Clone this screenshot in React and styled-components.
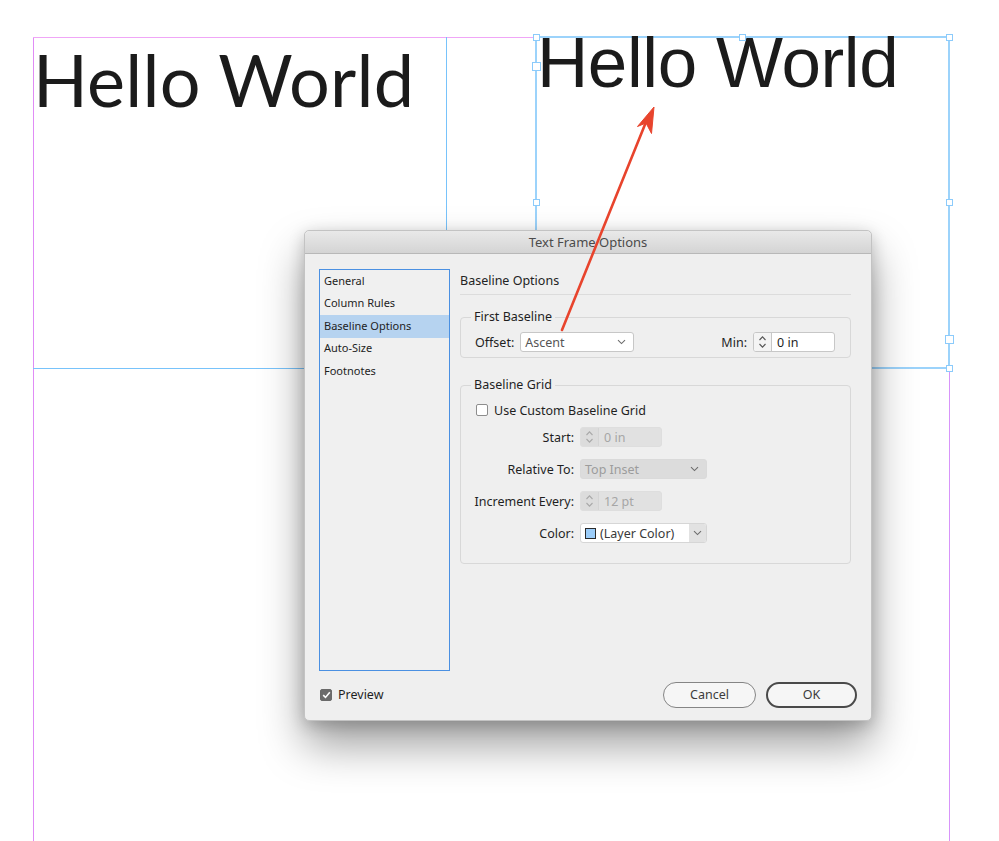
import React from "react";
import styled, { createGlobalStyle } from "styled-components";

const GlobalStyle = createGlobalStyle`
  html, body {
    margin: 0;
    padding: 0;
    background: #fff;
  }
  body {
    width: 999px;
    height: 841px;
    overflow: hidden;
  }
`;

const UI_FONT = `"Noto Sans", "DejaVu Sans", sans-serif`;

const Page = styled.div`
  position: relative;
  width: 999px;
  height: 841px;
  background: #fff;
  overflow: hidden;
`;

// canvas items: margin guides, frame edges, handles
const Guide = styled.div`
  position: absolute;
  left: ${(p) => p.$x}px;
  top: ${(p) => p.$y}px;
  width: ${(p) => p.$w}px;
  height: ${(p) => p.$h}px;
  background: ${(p) => p.$color};
`;

const TextFrame = styled.div`
  position: absolute;
  left: ${(p) => p.$x}px;
  top: ${(p) => p.$y}px;
  width: ${(p) => p.$w}px;
  height: ${(p) => p.$h}px;
  box-sizing: border-box;
  border: ${(p) => (p.$selected ? "2px solid #9cd3fb" : "none")};
`;

const FrameText = styled.div`
  font-family: ${(p) => p.$font};
  font-size: ${(p) => p.$size}px;
  letter-spacing: ${(p) => p.$track}px;
  color: #1b1b1b;
  white-space: nowrap;
  line-height: 1;
  margin-left: ${(p) => p.$dx}px;
  margin-top: ${(p) => p.$dy}px;
`;

const Handle = styled.div`
  position: absolute;
  left: ${(p) => p.$x - p.$s / 2}px;
  top: ${(p) => p.$y - p.$s / 2}px;
  width: ${(p) => p.$s}px;
  height: ${(p) => p.$s}px;
  box-sizing: border-box;
  border: 1.5px solid #8ccbfb;
  background: #fff;
`;

const Overlay = styled.svg`
  position: absolute;
  left: 0;
  top: 0;
  pointer-events: none;
  z-index: 5;
`;

/* ---------- dialog ---------- */

const Dialog = styled.div`
  position: absolute;
  left: 304px;
  top: 230px;
  width: 568px;
  height: 491px;
  box-sizing: border-box;
  background: #efefef;
  border: 1px solid #c3c3c3;
  border-radius: 5px;
  box-shadow: 0 24px 44px rgba(0, 0, 0, 0.38), 0 4px 16px rgba(0, 0, 0, 0.2);
  font-family: ${UI_FONT};
  color: #232323;
  display: flex;
  flex-direction: column;
  z-index: 2;
`;

const TitleBar = styled.div`
  height: 22px;
  flex: none;
  border-radius: 5px 5px 0 0;
  background: linear-gradient(#e9e9e9, #d4d4d4);
  border-bottom: 1px solid #b8b8b8;
  display: flex;
  align-items: center;
  justify-content: center;
  font-size: 13px;
  color: #4b4b4b;
`;

const DialogBody = styled.div`
  flex: 1;
  display: flex;
  flex-direction: column;
  padding: 15px 20px 0 14px;
`;

const MainRow = styled.div`
  display: flex;
  align-items: flex-start;
`;

const Sidebar = styled.div`
  width: 131px;
  height: 402px;
  box-sizing: border-box;
  border: 1px solid #4a90e2;
  background: #f0f0f0;
  flex: none;
`;

const SideItem = styled.div`
  height: 22.5px;
  display: flex;
  align-items: center;
  padding: 0 0 2px 4px;
  box-sizing: border-box;
  font-size: 11px;
  color: #1e1e1e;
  background: ${(p) => (p.$active ? "#b6d3f0" : "transparent")};
`;

const Panel = styled.div`
  flex: 1;
  margin-left: 10px;
  display: flex;
  flex-direction: column;
`;

const PanelTitle = styled.div`
  height: 25px;
  line-height: 24px;
  font-size: 12.5px;
  border-bottom: 1px solid #dcdcdc;
`;

const Group = styled.fieldset`
  margin: ${(p) => p.$mt}px 0 0;
  border: 1px solid #d8d8d8;
  border-radius: 4px;
  padding: ${(p) => p.$pad};
  min-width: 0;

  legend {
    font-size: 12.5px;
    line-height: 16px;
    padding: 0 3px;
    margin-left: -4px;
    color: #1f1f1f;
  }
`;

const InlineRow = styled.div`
  display: flex;
  align-items: center;
  height: 20px;
  gap: 6px;
`;

const Label = styled.span`
  font-size: 12.5px;
  color: #1f1f1f;
  white-space: nowrap;
`;

const Push = styled.div`
  margin-left: auto;
  display: flex;
  align-items: center;
  gap: 6px;
`;

const Select = styled.div`
  width: ${(p) => p.$w}px;
  height: 20px;
  box-sizing: border-box;
  border: 1px solid ${(p) => (p.$disabled ? "#dadada" : "#c7c7c7")};
  border-radius: 3px;
  background: ${(p) => (p.$disabled ? "#dcdcdc" : "#fff")};
  display: flex;
  align-items: center;
  padding: 0 7px 0 4px;
  font-size: 12.5px;
  color: ${(p) => (p.$disabled ? "#9c9c9c" : "#555")};
  justify-content: space-between;
`;

const SplitSelect = styled.div`
  width: ${(p) => p.$w}px;
  height: 20px;
  box-sizing: border-box;
  border: 1px solid #d6d6d6;
  border-radius: 3px;
  background: #fff;
  display: flex;
  overflow: hidden;
`;

const SplitMain = styled.div`
  flex: 1;
  display: flex;
  align-items: center;
  gap: 4px;
  padding-left: 4px;
  font-size: 12.5px;
  color: #3a3a3a;
`;

const SplitArrow = styled.div`
  width: 17px;
  background: #e2e2e2;
  display: flex;
  align-items: center;
  justify-content: center;
`;

const Swatch = styled.span`
  width: 11px;
  height: 11px;
  box-sizing: border-box;
  border: 1px solid #2b2b2b;
  background: #9ccdf9;
`;

const Spinner = styled.div`
  width: 82px;
  height: 20px;
  box-sizing: border-box;
  border: 1px solid ${(p) => (p.$disabled ? "#dedede" : "#c7c7c7")};
  border-radius: 3px;
  background: ${(p) => (p.$disabled ? "#e1e1e1" : "#fff")};
  display: flex;
  align-items: stretch;
  overflow: hidden;
`;

const SpinButtons = styled.div`
  width: 17px;
  border-right: 1px solid ${(p) => (p.$disabled ? "#d4d4d4" : "#c7c7c7")};
  background: ${(p) => (p.$disabled ? "#dcdcdc" : "#f4f4f4")};
  display: flex;
  align-items: center;
  justify-content: center;
`;

const SpinValue = styled.div`
  flex: 1;
  display: flex;
  align-items: center;
  padding-left: 5px;
  font-size: 12.5px;
  color: ${(p) => (p.$disabled ? "#a6a6a6" : "#1f1f1f")};
`;

const CheckRow = styled.label`
  display: flex;
  align-items: center;
  gap: 6px;
  height: 16px;
  padding-left: 1px;
  font-size: 12.5px;
  color: #1f1f1f;
`;

const Box = styled.span`
  width: 12px;
  height: 12px;
  box-sizing: border-box;
  border-radius: 2px;
  border: 1px solid ${(p) => (p.$checked ? "#6a6a6a" : "#8d8d8d")};
  background: ${(p) => (p.$checked ? "#6c6c6c" : "#fff")};
  display: flex;
  align-items: center;
  justify-content: center;
`;

const FieldGrid = styled.div`
  display: grid;
  grid-template-columns: 99px auto;
  column-gap: 6px;
  row-gap: 12px;
  margin-top: 9px;
  align-items: center;
  justify-items: start;

  & > ${Label} {
    justify-self: end;
  }
`;

const Footer = styled.div`
  display: flex;
  align-items: center;
  justify-content: space-between;
  margin-top: 10px;
  margin-right: -6px;
  height: 27px;
`;

const Buttons = styled.div`
  display: flex;
  gap: 10px;
`;

const PillButton = styled.button`
  width: ${(p) => p.$w}px;
  height: 26px;
  box-sizing: border-box;
  border-radius: 13px;
  border: ${(p) => (p.$primary ? "2px solid #4a4a4a" : "1px solid #858585")};
  background: #f6f6f6;
  font-family: ${UI_FONT};
  font-size: 12.5px;
  color: #3c3c3c;
  padding: 0;
`;

const Chevron = () => (
  <svg width="9" height="6" viewBox="0 0 9 6">
    <path d="M1 1.2 L4.5 4.6 L8 1.2" fill="none" stroke="#6d6d6d" strokeWidth="1.1" />
  </svg>
);

const SpinArrows = ({ disabled }) => (
  <svg width="9" height="16" viewBox="0 0 9 16">
    <g fill="none" stroke={disabled ? "#a9a9a9" : "#555"} strokeWidth="1.1">
      <path d="M1.5 6 L4.5 2.8 L7.5 6" />
      <path d="M1.5 10 L4.5 13.2 L7.5 10" />
    </g>
  </svg>
);

const Field = ({ value, disabled }) => (
  <Spinner $disabled={disabled}>
    <SpinButtons $disabled={disabled}>
      <SpinArrows disabled={disabled} />
    </SpinButtons>
    <SpinValue $disabled={disabled}>{value}</SpinValue>
  </Spinner>
);

const sections = ["General", "Column Rules", "Baseline Options", "Auto-Size", "Footnotes"];

const handles = [
  [536, 37, 7], [742.5, 37, 7], [949, 37, 7],
  [536, 202, 7], [949, 202, 7], [949, 368, 7],
  [536, 66, 9], [949, 339, 9],
];

export default function App() {
  return (
    <Page>
      <GlobalStyle />

      {/* margin guides */}
      <Guide $x={33} $y={37} $w={1} $h={804} $color="#e08cf6" />
      <Guide $x={33} $y={37} $w={916} $h={1} $color="#f0a6f7" />
      <Guide $x={949} $y={368} $w={1} $h={473} $color="#d894fa" />

      {/* left frame */}
      <Guide $x={446} $y={37} $w={1} $h={331} $color="#78c3fb" />
      <Guide $x={33} $y={368} $w={916} $h={1} $color="#78c3fb" />
      <TextFrame $x={33} $y={37} $w={413} $h={331}>
        <FrameText $font={`Lato, "Noto Sans", sans-serif`} $size={72} $track={0.2} $dx={0} $dy={6}>
          Hello World
        </FrameText>
      </TextFrame>

      {/* selected frame */}
      <TextFrame $x={535} $y={36} $w={415} $h={333} $selected>
        <FrameText $font={`"Liberation Sans", Arial, sans-serif`} $size={71} $track={-0.4} $dx={0} $dy={-11}>
          Hello World
        </FrameText>
      </TextFrame>
      {handles.map(([x, y, s], i) => (
        <Handle key={i} $x={x} $y={y} $s={s} />
      ))}

      <Dialog>
        <TitleBar>Text Frame Options</TitleBar>
        <DialogBody>
          <MainRow>
            <Sidebar>
              {sections.map((s) => (
                <SideItem key={s} $active={s === "Baseline Options"}>
                  {s}
                </SideItem>
              ))}
            </Sidebar>
            <Panel>
              <PanelTitle>Baseline Options</PanelTitle>

              <Group $mt={14} $pad="7px 15px 5px 14px">
                <legend>First Baseline</legend>
                <InlineRow>
                  <Label>Offset:</Label>
                  <Select $w={114}>
                    Ascent
                    <Chevron />
                  </Select>
                  <Push>
                    <Label>Min:</Label>
                    <Field value="0 in" />
                  </Push>
                </InlineRow>
              </Group>

              <Group $mt={19} $pad="9px 15px 20px 14px">
                <legend>Baseline Grid</legend>
                <CheckRow>
                  <Box />
                  Use Custom Baseline Grid
                </CheckRow>
                <FieldGrid>
                  <Label>Start:</Label>
                  <Field value="0 in" disabled />
                  <Label>Relative To:</Label>
                  <Select $w={127} $disabled>
                    Top Inset
                    <Chevron />
                  </Select>
                  <Label>Increment Every:</Label>
                  <Field value="12 pt" disabled />
                  <Label>Color:</Label>
                  <SplitSelect $w={127}>
                    <SplitMain>
                      <Swatch />
                      (Layer Color)
                    </SplitMain>
                    <SplitArrow>
                      <Chevron />
                    </SplitArrow>
                  </SplitSelect>
                </FieldGrid>
              </Group>
            </Panel>
          </MainRow>

          <Footer>
            <CheckRow>
              <Box $checked>
                <svg width="9" height="8" viewBox="0 0 9 8">
                  <path d="M1.2 4.2 L3.5 6.4 L7.8 1.2" fill="none" stroke="#fff" strokeWidth="1.6" />
                </svg>
              </Box>
              Preview
            </CheckRow>
            <Buttons>
              <PillButton $w={93}>Cancel</PillButton>
              <PillButton $w={91} $primary>
                OK
              </PillButton>
            </Buttons>
          </Footer>
        </DialogBody>
      </Dialog>

      {/* annotation arrow */}
      <Overlay width="999" height="841" viewBox="0 0 999 841">
        <line x1="562" y1="330" x2="646" y2="122" stroke="#e8442d" strokeWidth="2.6" strokeLinecap="round" />
        <path d="M654 107 L637.5 126.5 L646 123 L651.5 133.5 Z" fill="#e8442d" stroke="#e8442d" strokeWidth="1" strokeLinejoin="round" />
      </Overlay>
    </Page>
  );
}
